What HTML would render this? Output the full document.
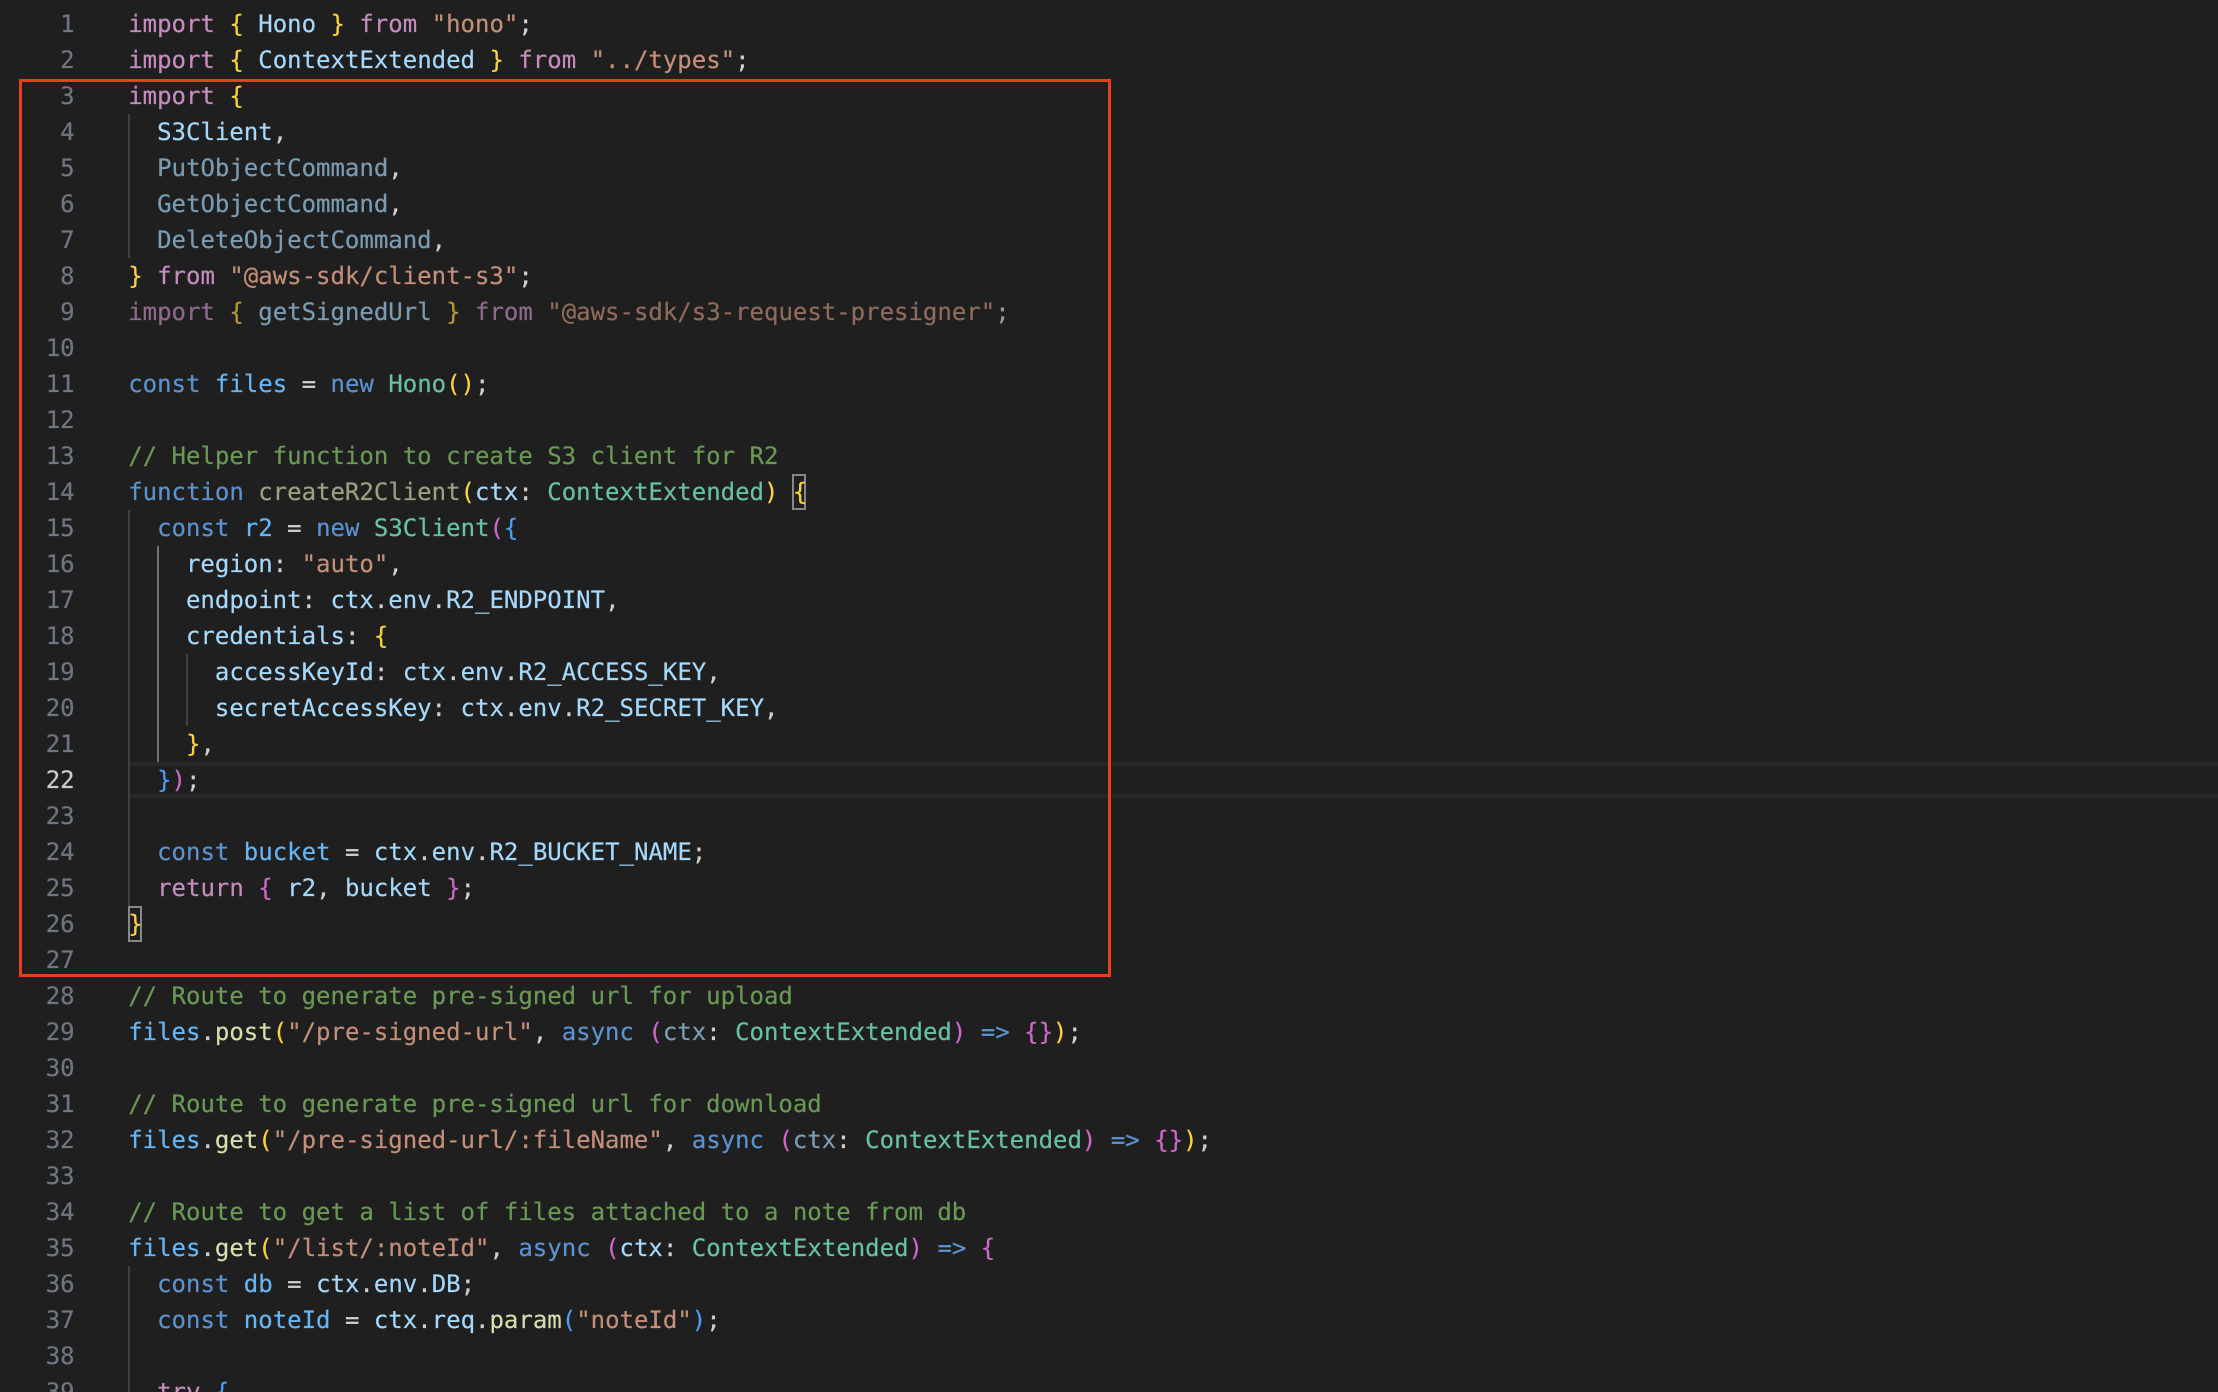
<!DOCTYPE html>
<html><head><meta charset="utf-8"><style>
html,body{margin:0;padding:0;background:#1f1f1f;width:2218px;height:1392px;overflow:hidden}
#e{position:relative;width:2218px;height:1392px;overflow:hidden;font-family:"DejaVu Sans Mono","Liberation Mono",monospace;font-size:24px;line-height:36px;text-rendering:geometricPrecision;color:#d0d0d0;-webkit-text-stroke:.2px}
.l{position:absolute;left:128.2px;white-space:pre;height:36px}
.n{position:absolute;left:20px;width:54.6px;text-align:right;color:#6e7681;height:36px}
.r{position:absolute}
.k{color:#c58cbf}.v{color:#a5d8fa}.c{color:#66b5f5}.s{color:#c48f78}.b{color:#5b93d0}.t{color:#68c0a5}.f{color:#d8dcae}.g{color:#6a9955}.y{color:#f8d33e}.p{color:#cc68c8}.u{color:#4c9cf2}.d{opacity:.68}
</style></head><body><div id="e">
<div class="r" style="left:130px;top:762px;width:2088px;height:36px;box-sizing:border-box;border-top:4px solid #282828;border-bottom:4px solid #282828"></div>
<div class="r" style="left:128px;top:114px;width:2px;height:144px;background:#404040"></div>
<div class="r" style="left:128px;top:510px;width:2px;height:396px;background:#404040"></div>
<div class="r" style="left:157px;top:546px;width:2px;height:216px;background:#707070"></div>
<div class="r" style="left:186px;top:654px;width:2px;height:72px;background:#404040"></div>
<div class="r" style="left:128px;top:1266px;width:2px;height:126px;background:#404040"></div>
<div class="r" style="left:792px;top:474px;width:14px;height:36px;box-sizing:border-box;border:2px solid #888"></div>
<div class="r" style="left:128px;top:906px;width:14px;height:36px;box-sizing:border-box;border:2px solid #888"></div>

<div class="n" style="top:6px">1</div><div class="l" style="top:6px"><span class="k">import</span> <span class="y">{</span> <span class="v">Hono</span> <span class="y">}</span> <span class="k">from</span> <span class="s">"hono"</span>;</div>
<div class="n" style="top:42px">2</div><div class="l" style="top:42px"><span class="k">import</span> <span class="y">{</span> <span class="v">ContextExtended</span> <span class="y">}</span> <span class="k">from</span> <span class="s">"../types"</span>;</div>
<div class="n" style="top:78px">3</div><div class="l" style="top:78px"><span class="k">import</span> <span class="y">{</span></div>
<div class="n" style="top:114px">4</div><div class="l" style="top:114px">  <span class="v">S3Client</span>,</div>
<div class="n" style="top:150px">5</div><div class="l" style="top:150px">  <span class="v d">PutObjectCommand</span>,</div>
<div class="n" style="top:186px">6</div><div class="l" style="top:186px">  <span class="v d">GetObjectCommand</span>,</div>
<div class="n" style="top:222px">7</div><div class="l" style="top:222px">  <span class="v d">DeleteObjectCommand</span>,</div>
<div class="n" style="top:258px">8</div><div class="l" style="top:258px"><span class="y">}</span> <span class="k">from</span> <span class="s">"@aws-sdk/client-s3"</span>;</div>
<div class="n" style="top:294px">9</div><div class="l" style="top:294px"><span class="d"><span class="k">import</span> <span class="y">{</span> <span class="v">getSignedUrl</span> <span class="y">}</span> <span class="k">from</span> <span class="s">"@aws-sdk/s3-request-presigner"</span>;</span></div>
<div class="n" style="top:330px">10</div>
<div class="n" style="top:366px">11</div><div class="l" style="top:366px"><span class="b">const</span> <span class="c">files</span> = <span class="b">new</span> <span class="t">Hono</span><span class="y">()</span>;</div>
<div class="n" style="top:402px">12</div>
<div class="n" style="top:438px">13</div><div class="l" style="top:438px"><span class="g">// Helper function to create S3 client for R2</span></div>
<div class="n" style="top:474px">14</div><div class="l" style="top:474px"><span class="b">function</span> <span class="f d">createR2Client</span><span class="y">(</span><span class="v">ctx</span>: <span class="t">ContextExtended</span><span class="y">)</span> <span class="y">{</span></div>
<div class="n" style="top:510px">15</div><div class="l" style="top:510px">  <span class="b">const</span> <span class="c">r2</span> = <span class="b">new</span> <span class="t">S3Client</span><span class="p">(</span><span class="u">{</span></div>
<div class="n" style="top:546px">16</div><div class="l" style="top:546px">    <span class="v">region</span>: <span class="s">"auto"</span>,</div>
<div class="n" style="top:582px">17</div><div class="l" style="top:582px">    <span class="v">endpoint</span>: <span class="v">ctx</span>.<span class="v">env</span>.<span class="v">R2_ENDPOINT</span>,</div>
<div class="n" style="top:618px">18</div><div class="l" style="top:618px">    <span class="v">credentials</span>: <span class="y">{</span></div>
<div class="n" style="top:654px">19</div><div class="l" style="top:654px">      <span class="v">accessKeyId</span>: <span class="v">ctx</span>.<span class="v">env</span>.<span class="v">R2_ACCESS_KEY</span>,</div>
<div class="n" style="top:690px">20</div><div class="l" style="top:690px">      <span class="v">secretAccessKey</span>: <span class="v">ctx</span>.<span class="v">env</span>.<span class="v">R2_SECRET_KEY</span>,</div>
<div class="n" style="top:726px">21</div><div class="l" style="top:726px">    <span class="y">}</span>,</div>
<div class="n" style="top:762px;color:#ccc">22</div><div class="l" style="top:762px">  <span class="u">}</span><span class="p">)</span>;</div>
<div class="n" style="top:798px">23</div>
<div class="n" style="top:834px">24</div><div class="l" style="top:834px">  <span class="b">const</span> <span class="c">bucket</span> = <span class="v">ctx</span>.<span class="v">env</span>.<span class="v">R2_BUCKET_NAME</span>;</div>
<div class="n" style="top:870px">25</div><div class="l" style="top:870px">  <span class="k">return</span> <span class="p">{</span> <span class="v">r2</span>, <span class="v">bucket</span> <span class="p">}</span>;</div>
<div class="n" style="top:906px">26</div><div class="l" style="top:906px"><span class="y">}</span></div>
<div class="n" style="top:942px">27</div>
<div class="n" style="top:978px">28</div><div class="l" style="top:978px"><span class="g">// Route to generate pre-signed url for upload</span></div>
<div class="n" style="top:1014px">29</div><div class="l" style="top:1014px"><span class="c">files</span>.<span class="f">post</span><span class="y">(</span><span class="s">"/pre-signed-url"</span>, <span class="b">async</span> <span class="p">(</span><span class="v d">ctx</span>: <span class="t">ContextExtended</span><span class="p">)</span> <span class="b">=&gt;</span> <span class="p">{}</span><span class="y">)</span>;</div>
<div class="n" style="top:1050px">30</div>
<div class="n" style="top:1086px">31</div><div class="l" style="top:1086px"><span class="g">// Route to generate pre-signed url for download</span></div>
<div class="n" style="top:1122px">32</div><div class="l" style="top:1122px"><span class="c">files</span>.<span class="f">get</span><span class="y">(</span><span class="s">"/pre-signed-url/:fileName"</span>, <span class="b">async</span> <span class="p">(</span><span class="v d">ctx</span>: <span class="t">ContextExtended</span><span class="p">)</span> <span class="b">=&gt;</span> <span class="p">{}</span><span class="y">)</span>;</div>
<div class="n" style="top:1158px">33</div>
<div class="n" style="top:1194px">34</div><div class="l" style="top:1194px"><span class="g">// Route to get a list of files attached to a note from db</span></div>
<div class="n" style="top:1230px">35</div><div class="l" style="top:1230px"><span class="c">files</span>.<span class="f">get</span><span class="y">(</span><span class="s">"/list/:noteId"</span>, <span class="b">async</span> <span class="p">(</span><span class="v">ctx</span>: <span class="t">ContextExtended</span><span class="p">)</span> <span class="b">=&gt;</span> <span class="p">{</span></div>
<div class="n" style="top:1266px">36</div><div class="l" style="top:1266px">  <span class="b">const</span> <span class="c">db</span> = <span class="v">ctx</span>.<span class="v">env</span>.<span class="v">DB</span>;</div>
<div class="n" style="top:1302px">37</div><div class="l" style="top:1302px">  <span class="b">const</span> <span class="c">noteId</span> = <span class="v">ctx</span>.<span class="v">req</span>.<span class="f">param</span><span class="u">(</span><span class="s">"noteId"</span><span class="u">)</span>;</div>
<div class="n" style="top:1338px">38</div>
<div class="n" style="top:1374px">39</div><div class="l" style="top:1374px">  <span class="k">try</span> <span class="u">{</span></div>

<div class="r" style="left:19px;top:79px;width:1092px;height:898px;box-sizing:border-box;border:3px solid #ea3f1f"></div>
</div></body></html>
